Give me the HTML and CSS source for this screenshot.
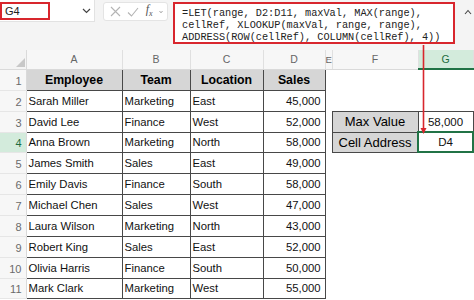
FILE: index.html
```html
<!DOCTYPE html>
<html lang="en">

<head>
    <meta charset="UTF-8">
    <meta name="viewport" content="width=device-width, initial-scale=1.0">
    <title>XLOOKUP cell address</title>
    <link rel="stylesheet" href="styles.css">
</head>

<body>

    <div class="topbar">
        <div class="namebox">
            <span class="ref">G4</span>
            <svg class="drop" width="9" height="6" viewBox="0 0 9 6"><path d="M1 1 L4.5 4.5 L8 1" fill="none" stroke="#444" stroke-width="1.2"/></svg>
        </div>
        <div class="fxtools">
            <svg width="11" height="11" viewBox="0 0 11 11"><path d="M1 1 L10 10 M10 1 L1 10" stroke="#b4b4b4" stroke-width="1.1"/></svg>
            <svg width="12" height="10" viewBox="0 0 12 10"><path d="M1 5.5 L4.5 9 L11 1" fill="none" stroke="#b4b4b4" stroke-width="1.1"/></svg>
            <span class="fx"><i>f</i><sub>x</sub></span>
            <svg width="4" height="4" viewBox="0 0 4 4"><path d="M0.5 1 L2 2.8 L3.5 1" fill="none" stroke="#999" stroke-width="0.9"/></svg>
        </div>
        <div class="formula">=LET(range, D2:D11, maxVal, MAX(range),
cellRef, XLOOKUP(maxVal, range, range),
ADDRESS(ROW(cellRef), COLUMN(cellRef), 4))</div>
        <svg class="collapse" width="8" height="6" viewBox="0 0 8 6"><path d="M1 5 L4 1.5 L7 5" fill="none" stroke="#444" stroke-width="1.1"/></svg>
    </div>

    <div class="sheet">
        <table class="grid">
            <colgroup>
                <col style="width: 26px">
                <col style="width: 96px">
                <col style="width: 68px">
                <col style="width: 73px">
                <col style="width: 62px">
                <col style="width: 7px">
                <col style="width: 86px">
                <col style="width: 55px">
                <col style="width: 1px">
            </colgroup>
            <thead>
                <tr>
                    <th class="corner"><svg width="9" height="9" viewBox="0 0 9 9"><polygon points="9,0 9,9 0,9" fill="#c8c8c8"/></svg></th>
                    <th class="col">A</th>
                    <th class="col">B</th>
                    <th class="col">C</th>
                    <th class="col">D</th>
                    <th class="col e">E</th>
                    <th class="col">F</th>
                    <th class="col sel">G</th>
                    <th class="col"></th>
                </tr>
            </thead>
            <tbody>
                <tr class="r21">
                    <td class="rh">1</td>
                    <td class="c h">Employee</td>
                    <td class="c h">Team</td>
                    <td class="c h">Location</td>
                    <td class="c h">Sales</td>
                    <td></td><td></td><td></td><td></td>
                </tr>
                <tr class="r21">
                    <td class="rh">2</td>
                    <td class="c">Sarah Miller</td>
                    <td class="c">Marketing</td>
                    <td class="c">East</td>
                    <td class="c n">45,000</td>
                    <td></td><td></td><td></td><td></td>
                </tr>
                <tr class="r21">
                    <td class="rh">3</td>
                    <td class="c">David Lee</td>
                    <td class="c">Finance</td>
                    <td class="c">West</td>
                    <td class="c n">52,000</td>
                    <td></td>
                    <td class="c k">Max Value</td>
                    <td class="c v">58,000</td>
                    <td></td>
                </tr>
                <tr class="r20">
                    <td class="rh sel">4</td>
                    <td class="c">Anna Brown</td>
                    <td class="c">Marketing</td>
                    <td class="c">North</td>
                    <td class="c n">58,000</td>
                    <td></td>
                    <td class="c k">Cell Address</td>
                    <td class="c v active">D4</td>
                    <td></td>
                </tr>
                <tr class="r21">
                    <td class="rh">5</td>
                    <td class="c">James Smith</td>
                    <td class="c">Sales</td>
                    <td class="c">East</td>
                    <td class="c n">49,000</td>
                    <td></td><td></td><td></td><td></td>
                </tr>
                <tr class="r21">
                    <td class="rh">6</td>
                    <td class="c">Emily Davis</td>
                    <td class="c">Finance</td>
                    <td class="c">South</td>
                    <td class="c n">58,000</td>
                    <td></td><td></td><td></td><td></td>
                </tr>
                <tr class="r21">
                    <td class="rh">7</td>
                    <td class="c">Michael Chen</td>
                    <td class="c">Sales</td>
                    <td class="c">West</td>
                    <td class="c n">47,000</td>
                    <td></td><td></td><td></td><td></td>
                </tr>
                <tr class="r21">
                    <td class="rh">8</td>
                    <td class="c">Laura Wilson</td>
                    <td class="c">Marketing</td>
                    <td class="c">North</td>
                    <td class="c n">43,000</td>
                    <td></td><td></td><td></td><td></td>
                </tr>
                <tr class="r21">
                    <td class="rh">9</td>
                    <td class="c">Robert King</td>
                    <td class="c">Sales</td>
                    <td class="c">East</td>
                    <td class="c n">52,000</td>
                    <td></td><td></td><td></td><td></td>
                </tr>
                <tr class="r21">
                    <td class="rh">10</td>
                    <td class="c">Olivia Harris</td>
                    <td class="c">Finance</td>
                    <td class="c">South</td>
                    <td class="c n">50,000</td>
                    <td></td><td></td><td></td><td></td>
                </tr>
                <tr class="r20">
                    <td class="rh">11</td>
                    <td class="c">Mark Clark</td>
                    <td class="c">Marketing</td>
                    <td class="c">West</td>
                    <td class="c n">55,000</td>
                    <td></td><td></td><td></td><td></td>
                </tr>
            </tbody>
        </table>

        <!-- red pointer from the formula down to the result cell -->
        <svg class="arrow" width="7" height="90" viewBox="0 0 7 90">
            <line x1="3.5" y1="0" x2="3.5" y2="84" stroke="#d8262d" stroke-width="1.6"/>
            <polygon points="0.5,83 6.5,83 3.5,89" fill="#d8262d"/>
        </svg>
    </div>

</body>

</html>
```

FILE: styles.css
```css
* {
    padding: 0;
    margin: 0;
    box-sizing: border-box;
}

body {
    width: 474px;
    height: 300px;
    overflow: hidden;
    position: relative;
    background-color: #fff;
    font-family: "Liberation Sans", Arial, sans-serif;
    color: #111;
}

/* formula bar */
.topbar {
    display: flex;
    align-items: flex-start;
    height: 50px;
    background-color: #f4f4f4;
}

.namebox {
    width: 95px;
    height: 22px;
    background-color: #fff;
    border: 1px solid #e2e2e2;
    border-left: none;
    border-top: none;
    display: flex;
    align-items: center;
    justify-content: space-between;
    padding-right: 3px;
}

.namebox .ref {
    width: 50px;
    height: 18px;
    border: 2px solid #d8262d;
    font-size: 11px;
    line-height: 14px;
    padding-left: 3px;
    color: #222;
}

.fxtools {
    width: 65px;
    height: 19px;
    margin: 2px 0 0 8px;
    background-color: #fff;
    border: 1px solid #e4e4e4;
    border-radius: 3px;
    display: flex;
    align-items: center;
    justify-content: space-between;
    padding: 0 4px 0 6px;
}

.fx {
    font-family: "Liberation Serif", serif;
    font-size: 12px;
    color: #555;
    line-height: 12px;
}

.fx sub {
    font-size: 8px;
    font-style: italic;
}

.formula {
    width: 282px;
    height: 42px;
    margin: 2px 0 0 5px;
    border: 2px solid #d8262d;
    background-color: #fff;
    font-family: "Liberation Mono", monospace;
    font-size: 10.25px;
    line-height: 12px;
    padding: 3px 0 0 7px;
    white-space: pre;
    color: #222;
}

.collapse {
    margin: 9px 2px 0 auto;
}

/* worksheet */
.grid {
    table-layout: fixed;
    border-collapse: collapse;
    width: 474px;
}

.grid th,
.grid td {
    padding: 0;
    overflow: hidden;
    white-space: nowrap;
}

.grid thead tr {
    height: 19px;
}

.r21 {
    height: 21px;
}

.r20 {
    height: 20px;
}

.corner {
    background-color: #f4f4f4;
    border-right: 1px solid #dadada;
    border-bottom: 1px solid #dadada;
    text-align: right;
    vertical-align: bottom;
    line-height: 0;
    padding: 0 1px 2px 0 !important;
}

.col {
    background-color: #f7f7f7;
    border-right: 1px solid #e0e0e0;
    border-bottom: 1px solid #dadada;
    font-weight: normal;
    font-size: 10.5px;
    color: #666;
    text-align: center;
}

.grid .col.e {
    font-size: 9.5px;
    text-align: left;
    overflow: visible;
}

.col.sel {
    background-color: #d3ebdc;
    color: #1d6b40;
    border-bottom: 2px solid #217346;
}

.rh {
    background-color: #f7f7f7;
    border-right: 1px solid #dadada;
    border-bottom: 1px solid #e6e6e6;
    font-size: 11px;
    color: #6a6a6a;
    text-align: right;
    padding-right: 4px !important;
    padding-top: 2px !important;
}

.rh.sel {
    background-color: #d3ebdc;
    color: #1d6b40;
}

.c {
    border: 1px solid #484848;
    font-size: 11.3px;
    padding-left: 2px !important;
    color: #111;
}

.h {
    background-color: #d6d6d6;
    font-weight: bold;
    font-size: 12.3px;
    text-align: center;
    padding-left: 0 !important;
    color: #000;
}

.n {
    text-align: right;
    padding-right: 4px !important;
}

.k {
    background-color: #d6d6d6;
    font-size: 13px;
    text-align: center;
    padding-left: 0 !important;
    color: #000;
}

.v {
    text-align: center;
    padding-left: 0 !important;
    font-size: 11.5px;
}

.active {
    outline: 2px solid #217346;
    outline-offset: -1px;
}

.arrow {
    position: absolute;
    left: 420px;
    top: 45px;
}
```
